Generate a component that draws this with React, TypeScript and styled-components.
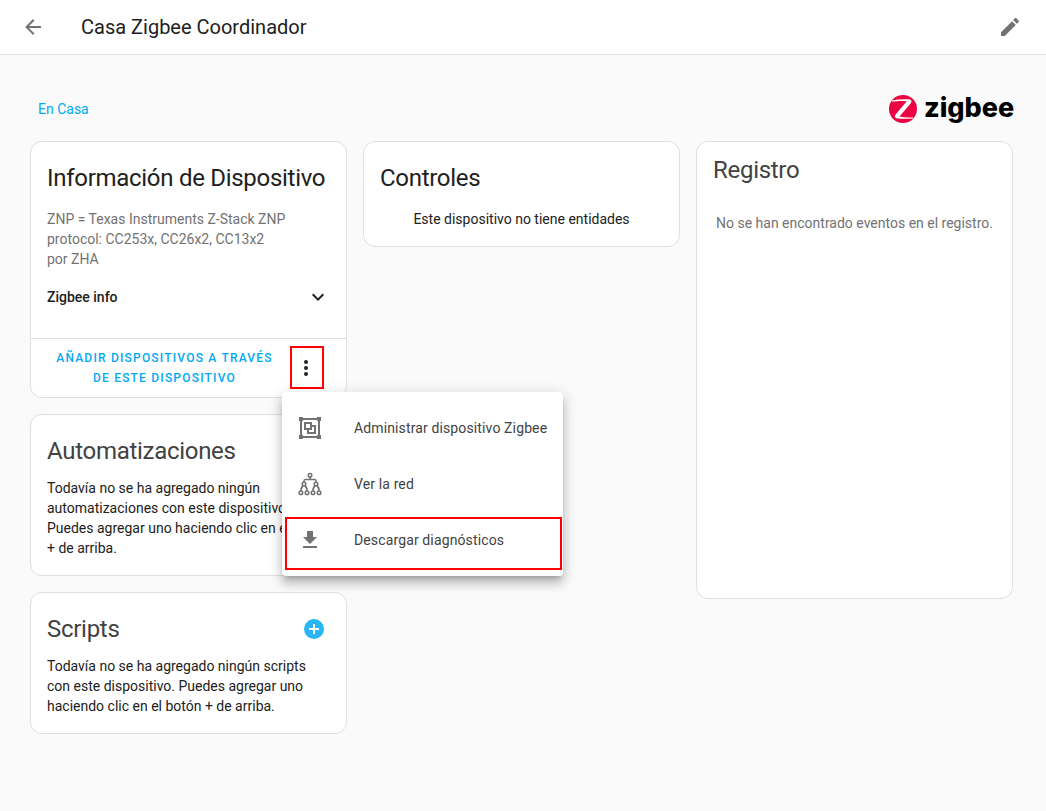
import React from "react";
import styled, { createGlobalStyle } from "styled-components";

const paths = {
  back: "M20,11V13H8L13.5,18.5L12.08,19.92L4.16,12L12.08,4.08L13.5,5.5L8,11H20Z",
  pencil:
    "M20.71,7.04C21.1,6.65 21.1,6 20.71,5.63L18.37,3.29C18,2.9 17.35,2.9 16.96,3.29L15.12,5.12L18.87,8.87M3,17.25V21H6.75L17.81,9.93L14.06,6.18L3,17.25Z",
  dots: "M12,16A2,2 0 0,1 14,18A2,2 0 0,1 12,20A2,2 0 0,1 10,18A2,2 0 0,1 12,16M12,10A2,2 0 0,1 14,12A2,2 0 0,1 12,14A2,2 0 0,1 10,12A2,2 0 0,1 12,10M12,4A2,2 0 0,1 14,6A2,2 0 0,1 12,8A2,2 0 0,1 10,6A2,2 0 0,1 12,4Z",
  chevron: "M7.41,8.58L12,13.17L16.59,8.58L18,10L12,16L6,10L7.41,8.58Z",
  plus: "M17,13H13V17H11V13H7V11H11V7H13V11H17M12,2A10,10 0 0,0 2,12A10,10 0 0,0 12,22A10,10 0 0,0 22,12A10,10 0 0,0 12,2Z",
  group:
    "M1,1V5H2V19H1V23H5V22H19V23H23V19H22V5H23V1H19V2H5V1M5,4H19V5H20V19H19V20H5V19H4V5H5M6,6V14H9V18H18V9H14V6M8,8H12V12H8M14,11H16V16H11V14H14",
  download: "M5,20H19V18H5M19,9H15V3H9V9H5L12,16L19,9Z",
};

const GlobalStyle = createGlobalStyle`
  *, *::before, *::after { box-sizing: border-box; }
  body {
    margin: 0;
    background: #fafafa;
    color: #212121;
    font-family: Roboto, "Noto Sans", sans-serif;
    font-size: 14px;
    line-height: 20px;
  }
  h1, h2, p, ul { margin: 0; padding: 0; }
  button { font-family: inherit; border: 0; background: none; padding: 0; cursor: pointer; }
`;

const Svg = styled.svg`
  display: block;
  width: 24px;
  height: 24px;
  fill: currentColor;
  flex: none;
`;

const Icon = ({ d }: { d: string }) => (
  <Svg viewBox="0 0 24 24" aria-hidden="true">
    <path fillRule="evenodd" d={d} />
  </Svg>
);

const TreeIcon = () => (
  <Svg viewBox="0 0 24 24" aria-hidden="true">
    <g fill="none" stroke="currentColor" strokeWidth="1.5">
      <circle cx="12" cy="3.2" r="1.8" />
      <circle cx="6" cy="12" r="1.8" />
      <circle cx="18" cy="12" r="1.8" />
      <circle cx="2.9" cy="20.8" r="1.8" />
      <circle cx="9" cy="20.8" r="1.8" />
      <circle cx="15" cy="20.8" r="1.8" />
      <circle cx="21.1" cy="20.8" r="1.8" />
      <path d="M12 5V7.500M6 10.200V9Q6 7.500 7.500 7.500H16.500Q18 7.500 18 9V10.200" />
      <path
        d="M4.800 13.700L3.200 16.500V18.800M7.200 13.700L8.800 16.500V18.800M16.800 13.700L15.200 16.500V18.800M19.200 13.700L20.800 16.500V18.800"
        strokeWidth="1.8"
      />
    </g>
  </Svg>
);

const IconButton = styled.button<{ $color?: string }>`
  display: flex;
  align-items: center;
  justify-content: center;
  width: 48px;
  height: 48px;
  flex: none;
  color: ${(p) => p.$color ?? "#212121"};
`;

const Toolbar = styled.header`
  display: flex;
  align-items: center;
  gap: 24px;
  height: 55px;
  padding: 0 12px 0 9px;
  background: #fff;
  border-bottom: 1px solid #e0e0e0;
`;

const PageTitle = styled.h1`
  flex: 1;
  font-size: 20px;
  font-weight: 400;
  line-height: 24px;
`;

const Main = styled.main`
  padding: 38px 33px 32px 30px;
`;

const TopRow = styled.div`
  display: flex;
  align-items: center;
  justify-content: space-between;
  height: 32px;
  margin-bottom: 16px;
  padding-left: 8px;
`;

const AreaLink = styled.a`
  color: #03a9f4;
  text-decoration: none;
`;

const Logo = styled.svg`
  display: block;
  width: 125px;
  height: 32px;
  overflow: visible;
`;

const Columns = styled.div`
  display: grid;
  grid-template-columns: repeat(3, minmax(0, 1fr));
  gap: 16px;
  align-items: start;
`;

const Column = styled.div`
  display: flex;
  flex-direction: column;
  gap: 16px;
`;

const Card = styled.section`
  background: #fff;
  border: 1px solid #e0e0e0;
  border-radius: 12px;
`;

const CardBody = styled.div<{ $top?: number }>`
  padding: ${(p) => p.$top ?? 12}px 16px 17px;
`;

const CardHeader = styled.div<{ $gap: number }>`
  display: flex;
  align-items: center;
  justify-content: space-between;
  height: 48px;
  margin-bottom: ${(p) => p.$gap}px;
  margin-right: -8px;
`;

const CardTitle = styled.h2<{ $soft?: boolean }>`
  font-size: 24px;
  font-weight: 400;
  line-height: 48px;
  letter-spacing: -0.012em;
  white-space: nowrap;
  color: ${(p) => (p.$soft ? "#424242" : "#212121")};
`;

const Text = styled.p<{ $muted?: boolean; $center?: boolean }>`
  color: ${(p) => (p.$muted ? "#727272" : "#212121")};
  text-align: ${(p) => (p.$center ? "center" : "left")};
`;

const Expander = styled.button`
  display: flex;
  align-items: center;
  justify-content: space-between;
  width: 100%;
  height: 48px;
  margin-top: 4px;
  color: #212121;
  font-size: 14px;
  font-weight: 500;
`;

const Actions = styled.div`
  display: flex;
  align-items: center;
  padding: 5px 16px;
  border-top: 1px solid #e0e0e0;
`;

const TextButton = styled.button`
  flex: 1;
  color: #03a9f4;
  font-size: 12px;
  font-weight: 500;
  line-height: 20px;
  letter-spacing: 0.1em;
  text-transform: uppercase;
`;

const MenuAnchor = styled.div`
  position: relative;
`;

const Highlight = styled.span<{ $inset: string }>`
  position: absolute;
  inset: ${(p) => p.$inset};
  border: 2px solid #f00;
  pointer-events: none;
`;

const Menu = styled.ul`
  position: absolute;
  z-index: 2;
  top: 100%;
  left: 0;
  padding: 8px 0;
  list-style: none;
  background: #fff;
  border-radius: 4px;
  box-shadow: 0 5px 5px -3px rgba(0, 0, 0, 0.2), 0 8px 10px 1px rgba(0, 0, 0, 0.14),
    0 3px 14px 2px rgba(0, 0, 0, 0.12);
`;

const MenuEntry = styled.li`
  position: relative;
`;

const MenuButton = styled.button`
  display: flex;
  align-items: center;
  gap: 32px;
  width: 100%;
  height: 56px;
  padding: 0 16px;
  color: #727272;
  font-size: 14px;
  letter-spacing: 0.009em;
  white-space: nowrap;
`;

const MenuLabel = styled.span`
  color: #424242;
`;

const LogCard = styled(Card)`
  min-height: 458px;
`;

const ZigbeeLogo = () => (
  <Logo viewBox="0 0 125 32" role="img" aria-label="zigbee">
    <circle cx="15" cy="16" r="14" fill="#eb0443" />
    <path
      d="M4.500 7.300Q13 5.800 20.500 6.300Q25 6.800 22.800 10.200L11.500 23.600Q19 24.900 25.500 24.200L24.500 25.400Q15 26.300 8.500 25.200Q5.800 24.400 7.600 21.500L18.800 8.200Q11 7.400 4 8.700Z"
      fill="#fff"
    />
    <text
      x="36"
      y="24"
      fontFamily="Inter, sans-serif"
      fontWeight="800"
      fontSize="27"
    >
      zigbee
    </text>
  </Logo>
);

export default function App() {
  return (
    <>
      <GlobalStyle />
      <Toolbar>
        <IconButton $color="#727272" aria-label="Atrás">
          <Icon d={paths.back} />
        </IconButton>
        <PageTitle>Casa Zigbee Coordinador</PageTitle>
        <IconButton $color="#727272" aria-label="Editar">
          <Icon d={paths.pencil} />
        </IconButton>
      </Toolbar>
      <Main>
        <TopRow>
          <AreaLink href="#casa">En Casa</AreaLink>
          <ZigbeeLogo />
        </TopRow>
        <Columns>
          <Column>
            <Card>
              <CardBody>
                <CardHeader $gap={7}>
                  <CardTitle>Información de Dispositivo</CardTitle>
                </CardHeader>
                <Text $muted>
                  ZNP = Texas Instruments Z-Stack ZNP protocol: CC253x, CC26x2, CC13x2
                </Text>
                <Text $muted>por ZHA</Text>
                <Expander aria-expanded={false}>
                  Zigbee info
                  <Icon d={paths.chevron} />
                </Expander>
              </CardBody>
              <Actions>
                <TextButton>Añadir dispositivos a través de este dispositivo</TextButton>
                <MenuAnchor>
                  <IconButton aria-label="Más opciones" aria-haspopup="menu" aria-expanded>
                    <Icon d={paths.dots} />
                  </IconButton>
                  <Highlight $inset="2px 6px 3px 8px" />
                  <Menu>
                    <MenuEntry>
                      <MenuButton>
                        <Icon d={paths.group} />
                        <MenuLabel>Administrar dispositivo Zigbee</MenuLabel>
                      </MenuButton>
                    </MenuEntry>
                    <MenuEntry>
                      <MenuButton>
                        <TreeIcon />
                        <MenuLabel>Ver la red</MenuLabel>
                      </MenuButton>
                    </MenuEntry>
                    <MenuEntry>
                      <MenuButton>
                        <Icon d={paths.download} />
                        <MenuLabel>Descargar diagnósticos</MenuLabel>
                      </MenuButton>
                      <Highlight $inset="5px 1px -2px 3px" />
                    </MenuEntry>
                  </Menu>
                </MenuAnchor>
              </Actions>
            </Card>
            <Card>
              <CardBody>
                <CardHeader $gap={3}>
                  <CardTitle $soft>Automatizaciones</CardTitle>
                  <IconButton $color="#29b6f6" aria-label="Agregar automatización">
                    <Icon d={paths.plus} />
                  </IconButton>
                </CardHeader>
                <Text>
                  Todavía no se ha agregado ningún automatizaciones con este dispositivo. Puedes
                  agregar uno haciendo clic en el botón + de arriba.
                </Text>
              </CardBody>
            </Card>
            <Card>
              <CardBody>
                <CardHeader $gap={3}>
                  <CardTitle $soft>Scripts</CardTitle>
                  <IconButton $color="#29b6f6" aria-label="Agregar script">
                    <Icon d={paths.plus} />
                  </IconButton>
                </CardHeader>
                <Text>
                  Todavía no se ha agregado ningún scripts con este dispositivo. Puedes agregar uno
                  haciendo clic en el botón + de arriba.
                </Text>
              </CardBody>
            </Card>
          </Column>
          <Card>
            <CardBody>
              <CardHeader $gap={7}>
                <CardTitle>Controles</CardTitle>
              </CardHeader>
              <Text $center>Este dispositivo no tiene entidades</Text>
            </CardBody>
          </Card>
          <LogCard>
            <CardBody $top={4}>
              <CardHeader $gap={19}>
                <CardTitle $soft>Registro</CardTitle>
              </CardHeader>
              <Text $muted $center>
                No se han encontrado eventos en el registro.
              </Text>
            </CardBody>
          </LogCard>
        </Columns>
      </Main>
    </>
  );
}
